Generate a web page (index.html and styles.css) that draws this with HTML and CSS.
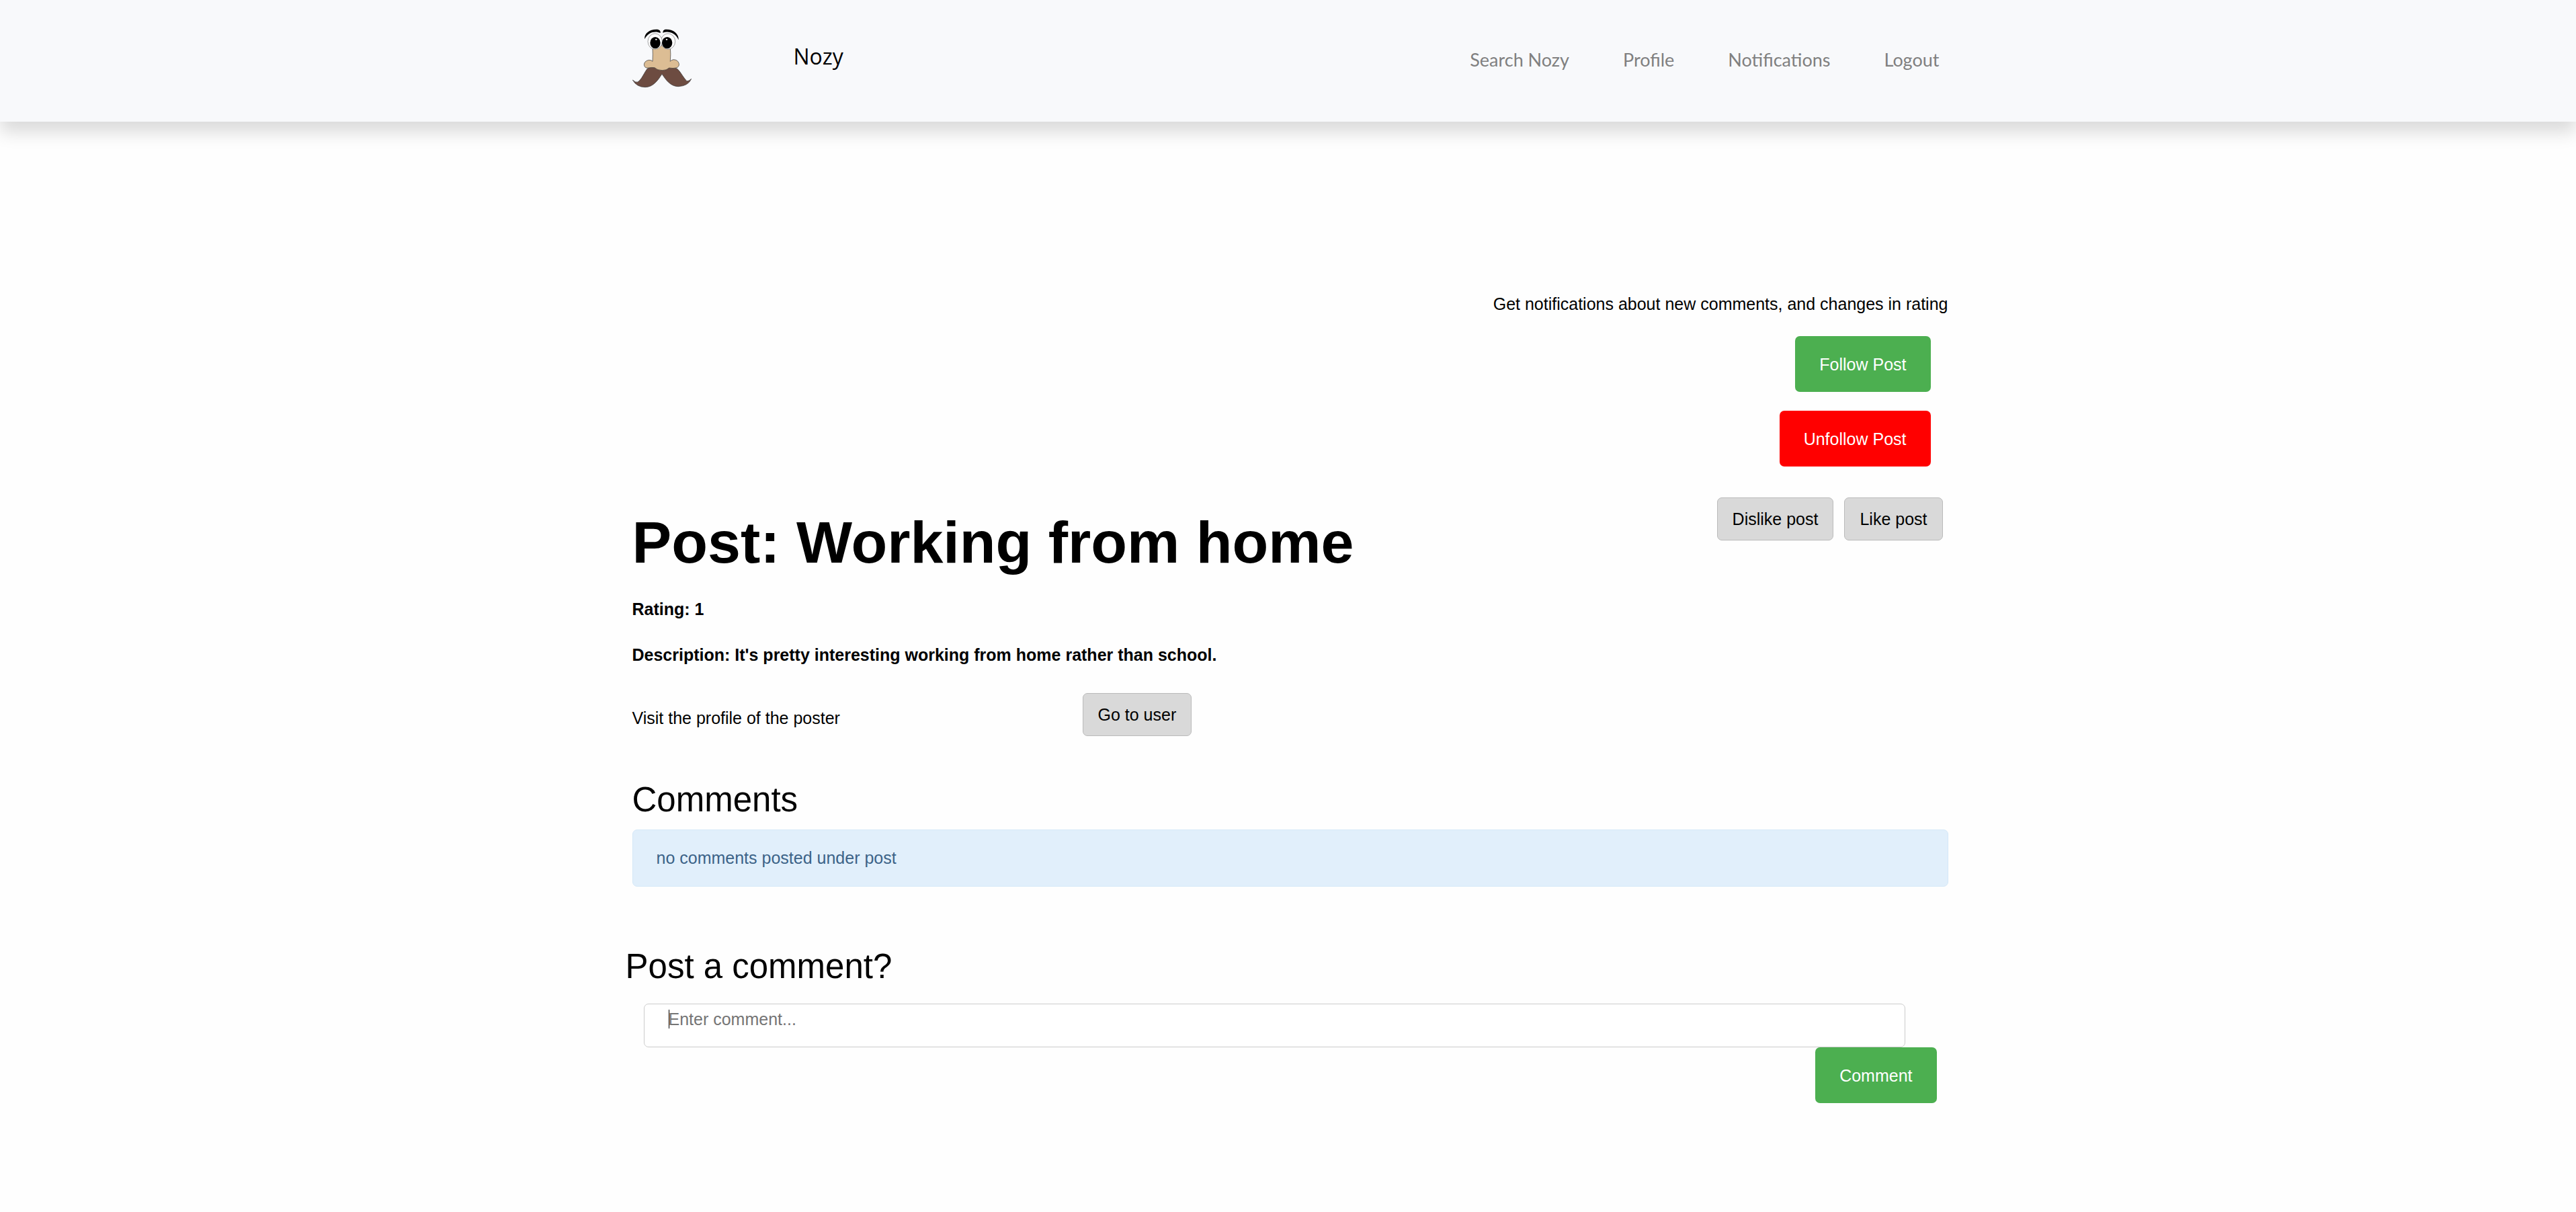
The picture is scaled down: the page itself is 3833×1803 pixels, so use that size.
FILE: index.html
```html
<!DOCTYPE html>
<html lang="en">
<head>
<meta charset="utf-8">
<title>Nozy</title>
<link rel="stylesheet" href="styles.css">
</head>
<body>
<header class="header">
  <div class="header-inner">
    <svg class="logo" viewBox="123 69 270 264" role="img" aria-label="Nozy logo">
      <path d="M190 246C176 263 165 294 147 306Q138 310 124 297Q142 329 180 329C215 329 237 299 255 270C273 298 294 326 328 326Q372 324 386 292Q377 302 366 302C350 287 338 259 322 246Q280 235 255 240Q222 232 190 246Z" fill="#6d4c41" stroke="#333" stroke-width="2"/>
      <path d="M213 152Q215 182 213 214Q208 207 196 208Q176 212 175 229Q177 245 193 243Q207 240 222 242Q234 254 256 254Q276 254 287 243Q304 246 318 243Q333 239 331 224Q326 206 306 206Q295 208 292 214Q295 180 292 152Q270 143 252 143Q228 143 213 152Z" fill="#dcbd94" stroke="#333" stroke-width="2"/>
      <ellipse cx="282" cy="125" rx="32" ry="35" fill="#fff" stroke="#444" stroke-width="1.5"/>
      <ellipse cx="224" cy="125" rx="32" ry="35" fill="#fff" stroke="#444" stroke-width="1.5"/>
      <ellipse cx="225" cy="131" rx="23" ry="26"/>
      <ellipse cx="278" cy="131" rx="23" ry="26"/>
      <ellipse cx="229" cy="116" rx="4" ry="3" fill="#fff"/>
      <ellipse cx="276" cy="116" rx="4" ry="3" fill="#fff"/>
      <path d="M178 114C174 92 200 68 238 72Q250 76 248 87C225 77 194 82 178 114ZM259 86Q258 76 267 72C300 68 331 88 329 118C313 84 283 78 259 86Z"/>
    </svg>
    <span class="brand">Nozy</span>
    <nav class="nav">
      <a href="#">Search Nozy</a>
      <a href="#">Profile</a>
      <a href="#">Notifications</a>
      <a href="#">Logout</a>
    </nav>
  </div>
</header>
<main class="container">
  <section class="post">
    <div class="follow">
      <p>Get notifications about new comments, and changes in rating</p>
      <button class="btn btn-green" type="button">Follow Post</button>
      <button class="btn btn-red" type="button">Unfollow Post</button>
    </div>
    <div class="title-row">
      <h1>Post: Working from home</h1>
      <div class="votes">
        <button class="btn btn-grey" type="button">Dislike post</button>
        <button class="btn btn-grey" type="button">Like post</button>
      </div>
    </div>
    <p class="rating">Rating: 1</p>
    <p class="description">Description: It's pretty interesting working from home rather than school.</p>
    <div class="poster">
      <p>Visit the profile of the poster</p>
      <button class="btn btn-grey" type="button">Go to user</button>
    </div>
    <h2>Comments</h2>
    <div class="alert">no comments posted under post</div>
  </section>
  <form class="comment-form">
    <h2><label for="comment">Post a comment?</label></h2>
    <div class="field">
      <textarea id="comment" placeholder="Enter comment..."></textarea>
      <span class="caret"></span>
    </div>
    <button class="btn btn-green" type="button">Comment</button>
  </form>
</main>
</body>
</html>
```
FILE: styles.css
```css
* {
  box-sizing: border-box;
}

body {
  margin: 0;
  background: #fefefe;
  color: #000;
  font: 25px/40px "Liberation Sans", Arial, sans-serif;
}

h1, h2, p {
  margin: 0;
}

.header {
  padding: 43px 0 50px;
  background: #f8f9fb;
  box-shadow: 0 16px 24px rgba(0, 0, 0, 0.14);
}

.header-inner,
.container {
  max-width: 1972px;
  margin: 0 auto;
}

.header-inner {
  display: flex;
  align-items: flex-start;
  padding: 0 17px 0 10px;
}

.logo {
  width: 90px;
  height: 88px;
}

.brand {
  margin-left: 150px;
  padding-top: 21px;
  font: 32px/40px "Open Sans", sans-serif;
}

.nav {
  display: flex;
  gap: 80px;
  margin-left: auto;
  padding-top: 26px;
  font-family: Lato, sans-serif;
  font-size: 27px;
}

.nav a {
  color: #808080;
  text-decoration: none;
}

.container {
  padding: 251px 0 120px;
}

.post {
  padding: 0 4px 0 10px;
}

.btn {
  height: 83px;
  padding: 0 36px;
  border: 0;
  border-radius: 7px;
  color: #fff;
  font: inherit;
}

.btn-green {
  background: #4caf50;
}

.btn-red {
  background: #f00;
}

.btn-grey {
  height: 64px;
  padding: 0 22px;
  border: 1px solid #bbb;
  background: #d9d9d9;
  color: #000;
}

.follow {
  display: flex;
  flex-direction: column;
  align-items: flex-end;
  gap: 28px;
}

.follow .btn {
  margin-right: 26px;
}

.title-row {
  display: flex;
  justify-content: space-between;
  margin-top: 46px;
}

h1 {
  margin-top: 15px;
  font-size: 88px;
  line-height: 104px;
}

.votes {
  display: flex;
  align-items: flex-start;
  gap: 16px;
  margin-right: 8px;
}

.rating,
.description {
  margin-top: 27px;
  font-weight: bold;
}

.description {
  margin-top: 28px;
}

.poster {
  display: grid;
  grid-template-columns: 670px auto;
  justify-content: start;
  align-items: center;
  margin-top: 37px;
}

.poster p {
  padding-top: 9px;
}

h2 {
  font-size: 51px;
  font-weight: normal;
  line-height: 60px;
}

.poster + h2 {
  margin-top: 65px;
}

.alert {
  margin-top: 14px;
  padding: 21px 35px 22px;
  border: 1px solid #d4e8f8;
  border-radius: 7px;
  background: #e1effb;
  color: #3c6388;
}

.comment-form {
  display: flex;
  flex-direction: column;
  margin-top: 89px;
}

.field {
  position: relative;
  display: flex;
  margin: 25px 68px 0 27px;
}

textarea {
  flex: 1;
  height: 65px;
  padding: 7px 36px;
  border: 1px solid #ccc;
  border-radius: 7px;
  background: #fff;
  font: inherit;
  line-height: 30px;
  resize: none;
  overflow: hidden;
}

textarea::placeholder {
  color: #757575;
}

.caret {
  position: absolute;
  top: 9px;
  left: 37px;
  width: 1px;
  height: 28px;
  background: #000;
}

.comment-form .btn {
  align-self: flex-end;
  margin-right: 21px;
}
```
